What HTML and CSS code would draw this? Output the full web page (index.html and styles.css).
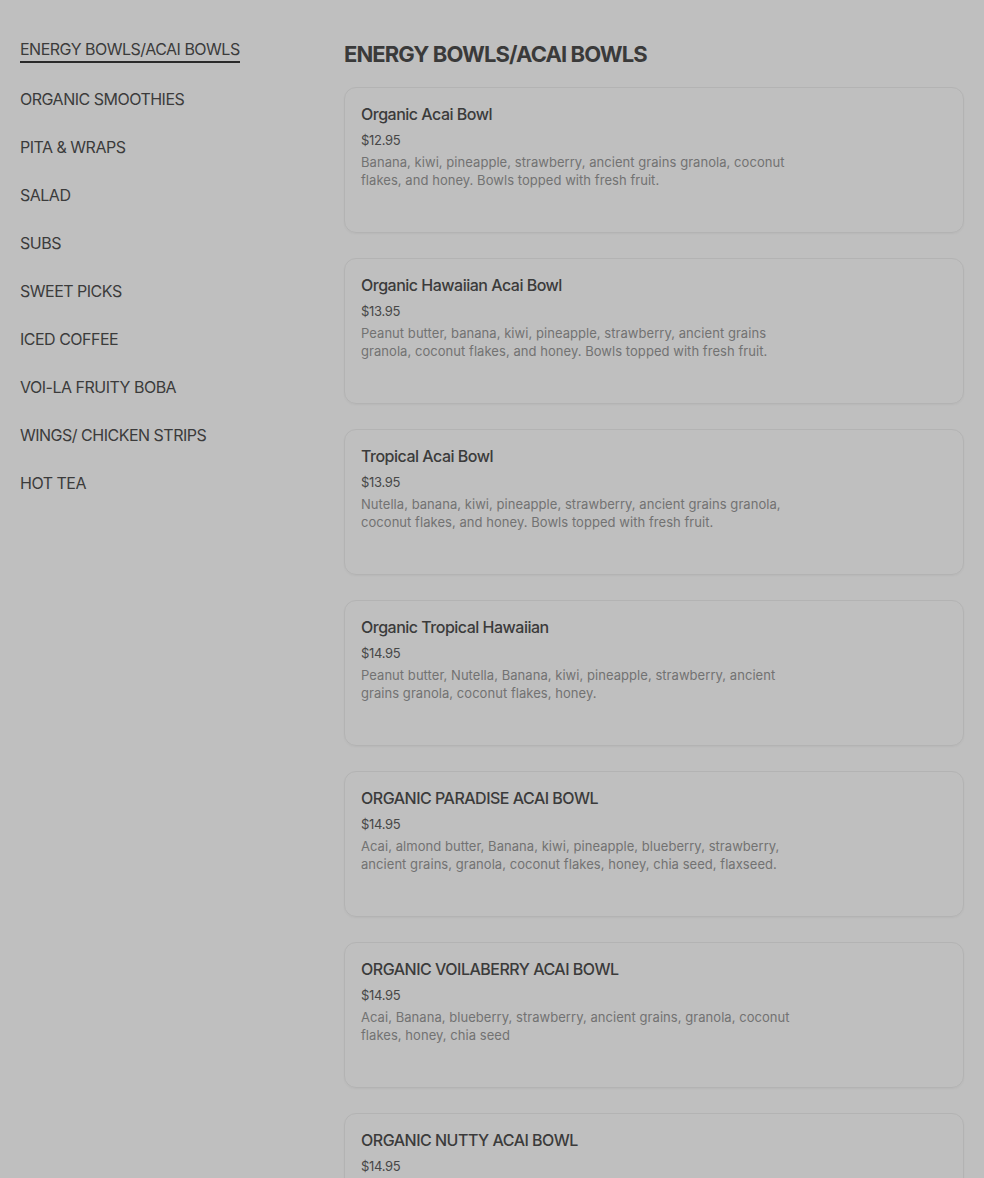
FILE: index.html
```html
<!DOCTYPE html>
<html lang="en">
  <head>
    <meta charset="UTF-8" />
    <meta name="viewport" content="width=device-width, initial-scale=1.0" />
    <title>Menu</title>
    <link rel="stylesheet" href="styles.css">
  </head>
  <body>
    <div class="menu">
      <nav class="categories">
        <a href="#" class="category active">ENERGY BOWLS/ACAI BOWLS</a>
        <a href="#" class="category">ORGANIC SMOOTHIES</a>
        <a href="#" class="category">PITA &amp; WRAPS</a>
        <a href="#" class="category">SALAD</a>
        <a href="#" class="category">SUBS</a>
        <a href="#" class="category">SWEET PICKS</a>
        <a href="#" class="category">ICED COFFEE</a>
        <a href="#" class="category">VOI-LA FRUITY BOBA</a>
        <a href="#" class="category">WINGS/ CHICKEN STRIPS</a>
        <a href="#" class="category">HOT TEA</a>
      </nav>
      <main class="section">
        <h2 class="section-title">ENERGY BOWLS/ACAI BOWLS</h2>
        <div class="items">
          <div class="item">
            <h3 class="item-name">Organic Acai Bowl</h3>
            <div class="item-price">$12.95</div>
            <p class="item-desc">Banana, kiwi, pineapple, strawberry, ancient grains granola, coconut flakes, and honey. Bowls topped with fresh fruit.</p>
          </div>
          <div class="item">
            <h3 class="item-name">Organic Hawaiian Acai Bowl</h3>
            <div class="item-price">$13.95</div>
            <p class="item-desc">Peanut butter, banana, kiwi, pineapple, strawberry, ancient grains granola, coconut flakes, and honey. Bowls topped with fresh fruit.</p>
          </div>
          <div class="item">
            <h3 class="item-name">Tropical Acai Bowl</h3>
            <div class="item-price">$13.95</div>
            <p class="item-desc">Nutella, banana, kiwi, pineapple, strawberry, ancient grains granola, coconut flakes, and honey. Bowls topped with fresh fruit.</p>
          </div>
          <div class="item">
            <h3 class="item-name">Organic Tropical Hawaiian</h3>
            <div class="item-price">$14.95</div>
            <p class="item-desc">Peanut butter, Nutella, Banana, kiwi, pineapple, strawberry, ancient grains granola, coconut flakes, honey.</p>
          </div>
          <div class="item">
            <h3 class="item-name">ORGANIC PARADISE ACAI BOWL</h3>
            <div class="item-price">$14.95</div>
            <p class="item-desc">Acai, almond butter, Banana, kiwi, pineapple, blueberry, strawberry, ancient grains, granola, coconut flakes, honey, chia seed, flaxseed.</p>
          </div>
          <div class="item">
            <h3 class="item-name">ORGANIC VOILABERRY ACAI BOWL</h3>
            <div class="item-price">$14.95</div>
            <p class="item-desc">Acai, Banana, blueberry, strawberry, ancient grains, granola, coconut flakes, honey, chia seed</p>
          </div>
          <div class="item">
            <h3 class="item-name">ORGANIC NUTTY ACAI BOWL</h3>
            <div class="item-price">$14.95</div>
            <p class="item-desc">Acai, peanut butter, almond butter, Banana, strawberry, ancient grains, granola, coconut flakes, honey.</p>
          </div>
        </div>
      </main>
    </div>
  </body>
</html>
```

FILE: styles.css
```css
body {
  margin: 0;
  font-family: Inter, "Liberation Sans", sans-serif;
  background-color: #bfbfbf;
  color: #3b3b3b;
}
.menu {
  display: grid;
  grid-template-columns: 324px 1fr;
  padding: 37px 20px 0 20px;
}
.categories {
  display: flex;
  flex-direction: column;
  align-items: flex-start;
  gap: 24px;
}
.category {
  font-size: 16px;
  line-height: 24px;
  letter-spacing: -0.5px;
  color: #3b3b3b;
  text-decoration: none;
}
.category.active {
  border-bottom: 2px solid #2a2a2a;
}
.section-title {
  margin: 1px 0 17px 0;
  font-size: 22px;
  line-height: 32px;
  font-weight: 700;
  letter-spacing: -0.9px;
  color: #3a3a3a;
}
.items {
  display: flex;
  flex-direction: column;
  gap: 25px;
}
.item {
  box-sizing: border-box;
  min-height: 146px;
  padding: 16px;
  border: 1px solid #b3b3b3;
  border-radius: 12px;
  box-shadow: 0 1px 2px rgba(0, 0, 0, 0.04);
}
.item-name {
  margin: 0 0 5px 0;
  font-size: 16px;
  line-height: 21px;
  font-weight: 500;
  letter-spacing: -0.5px;
  color: #3b3b3b;
}
.item-price {
  font-size: 13px;
  line-height: 20px;
  letter-spacing: -0.3px;
  color: #474747;
}
.item-desc {
  margin: 3px 0 0 0;
  max-width: 440px;
  font-size: 13px;
  line-height: 18px;
  letter-spacing: 0.05px;
  color: #727272;
}
```
